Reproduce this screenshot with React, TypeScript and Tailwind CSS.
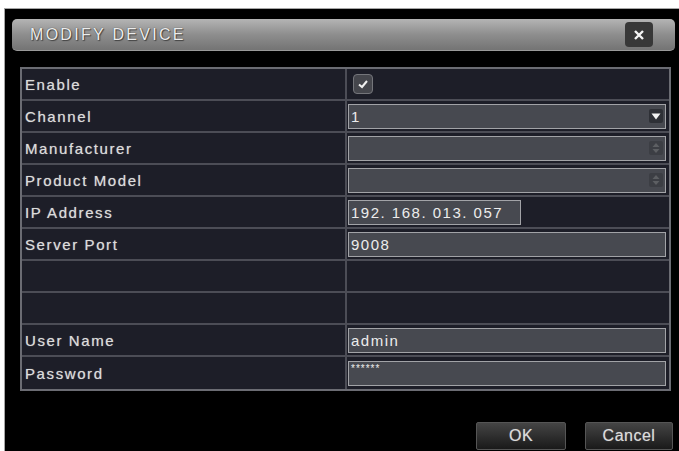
import React from "react";

const font = { fontFamily: '"Liberation Sans", Arial, sans-serif' };

function Arrow({ active }: { active: boolean }) {
  return (
    <svg width="14" height="14" viewBox="0 0 14 14" className="shrink-0">
      <rect x="0" y="0" width="14" height="14" rx="2" fill={active ? "#2e3036" : "#3c3e44"} />
      {active ? (
        <path d="M2.5 4.5 L11.5 4.5 L7 10.5 Z" fill="#f2f2f2" />
      ) : (
        <g fill="#5d5f63">
          <path d="M3.5 6 L10.5 6 L7 2 Z" />
          <path d="M3.5 8 L10.5 8 L7 12 Z" />
        </g>
      )}
    </svg>
  );
}

function Field({
  children,
  w,
  arrow,
  pw,
}: {
  children?: React.ReactNode;
  w?: string;
  arrow?: "on" | "off";
  pw?: boolean;
}) {
  return (
    <div
      className={`${w ?? "flex-1"} h-[25px] bg-[#474950] border-[1.5px] border-[#a2a3a7] flex items-center pl-[2px] pr-[2px] text-[#ececec] ${
        pw ? "text-[10px] items-start pt-[2px] tracking-[1px]" : "text-[15px] tracking-[1.5px]"
      }`}
    >
      <span className="flex-1 whitespace-nowrap leading-none">{children}</span>
      {arrow && <Arrow active={arrow === "on"} />}
    </div>
  );
}

type Row = { label: string; value?: React.ReactNode };

export default function App() {
  const rows: Row[] = [
    {
      label: "Enable",
      value: (
        <div className="ml-[5px] w-[20px] h-[20px] rounded-[4px] bg-[#45464c] border border-[#74757a] flex items-center justify-center">
          <svg width="12" height="12" viewBox="0 0 12 12">
            <path d="M2 6.5 L5 9 L10 3" stroke="#f0f0f0" strokeWidth="2" fill="none" />
          </svg>
        </div>
      ),
    },
    { label: "Channel", value: <Field arrow="on">1</Field> },
    { label: "Manufacturer", value: <Field arrow="off" /> },
    { label: "Product Model", value: <Field arrow="off" /> },
    { label: "IP Address", value: <Field w="w-[173px]">192. 168. 013. 057</Field> },
    { label: "Server Port", value: <Field>9008</Field> },
    { label: "" },
    { label: "" },
    { label: "User Name", value: <Field>admin</Field> },
    { label: "Password", value: <Field pw>******</Field> },
  ];

  return (
    <div className="w-[679px] h-[451px] bg-white pt-[8px] pl-[4px] overflow-hidden" style={font}>
      <div className="h-full bg-black border-l border-t border-[#a6a6a6] flex flex-col">
        {/* title bar */}
        <div className="mt-[10px] ml-[7px] mr-[4px] h-[32px] rounded-[5px] bg-gradient-to-b from-[#b4b4b4] via-[#8e8e8e] to-[#747474] border-b border-[#9a9a9a] flex items-center justify-between pl-[18px] pr-[22px]">
          <span
            className="text-[16px] tracking-[2.3px] text-[#ececec] leading-none"
            style={{ textShadow: "0 0 1px #333, 1px 1px 1px #444" }}
          >
            MODIFY DEVICE
          </span>
          <div className="w-[28px] h-[25px] rounded-[4px] bg-[#383838] flex items-center justify-center">
            <svg width="12" height="12" viewBox="0 0 12 12">
              <path d="M2 2 L10 10 M10 2 L2 10" stroke="#f4f4f4" strokeWidth="2.4" />
            </svg>
          </div>
        </div>

        {/* table */}
        <div className="mt-[16px] ml-[15px] w-[651px] border-2 border-[#6b6c73] flex flex-col">
          {rows.map((r, i) => (
            <div
              key={i}
              className={`h-[32px] flex bg-[#1d1e28] ${i < rows.length - 1 ? "border-b-2 border-[#4c4d56]" : ""}`}
            >
              <div
                className="w-[325px] border-r-2 border-[#4c4d56] flex items-center pl-[3px] pt-[2px] text-[15px] tracking-[1.6px] text-[#dcdcdc]"
                style={{ textShadow: "0 0 1px #999" }}
              >
                {r.label}
              </div>
              <div className="flex-1 flex items-center pl-[1px] pr-[3px]">{r.value}</div>
            </div>
          ))}
        </div>

        {/* buttons */}
        <div className="mt-auto mb-[1px] flex justify-end gap-[19px] mr-[6px]">
          {["OK", "Cancel"].map((b) => (
            <div
              key={b}
              className={`${b === "OK" ? "w-[90px]" : "w-[88px]"} h-[28px] rounded-[2px] border border-[#555] bg-gradient-to-b from-[#454545] to-[#1a1a1a] flex items-center justify-center text-[16px] tracking-[0.5px] text-[#dcdcdc]`}
              style={{ textShadow: "0 0 1px #888" }}
            >
              {b}
            </div>
          ))}
        </div>
      </div>
    </div>
  );
}
